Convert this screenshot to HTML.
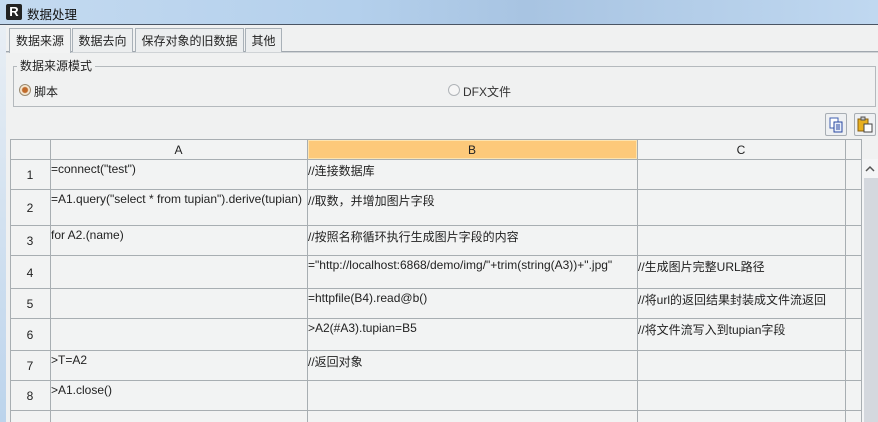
<!DOCTYPE html><html><head><meta charset="utf-8"><style>
*{margin:0;padding:0;box-sizing:border-box}
body{width:878px;height:422px;overflow:hidden;background:#f0f1f1;font:12px "Liberation Sans","Noto Sans CJK SC",sans-serif;color:#222;position:relative}
.a{position:absolute}
.title{left:0;top:0;width:878px;height:25px;background:linear-gradient(90deg,#c4daf0,#b4d0ec 40%,#a8c4e2 60%,#c0d8f0);border-bottom:1px solid #4a5564}
.tab{top:28px;height:24px;border:1px solid #a9b1b8;border-bottom:none;background:#eceeef;padding:4px 0 0;font-size:12px;white-space:nowrap;text-align:center;line-height:16px}
.cell{position:absolute;font-size:12px;padding:1px 1px;white-space:nowrap;overflow:hidden}
</style></head><body>
<div class="a title"></div>
<div class="a" style="left:6px;top:4px;width:16px;height:16px;background:#222;border-radius:2px;color:#fff;font:bold 13px 'Liberation Sans';text-align:center;line-height:16px">R</div>
<div class="a" style="left:27px;top:4px;font-size:12.5px;color:#111;white-space:nowrap">数据处理</div>
<div class="a" style="left:0;top:26px;width:6px;height:396px;background:linear-gradient(#e8eef4,#bcd4ec)"></div>
<div class="a" style="left:6px;top:51px;width:872px;height:2px;border-top:1px solid #a0a7ae;border-bottom:1px solid #cfd3d6"></div>
<div class="a tab" style="left:9px;width:62px;height:25px;background:#f2f3f3">数据来源</div>
<div class="a tab" style="left:72px;width:61px">数据去向</div>
<div class="a tab" style="left:135px;width:109px">保存对象的旧数据</div>
<div class="a tab" style="left:245px;width:37px">其他</div>
<div class="a" style="left:13px;top:66px;width:863px;height:41px;border:1px solid #b4b9bd"></div>
<div class="a" style="left:17px;top:59px;background:#f0f1f1;padding:0 3px;font-size:12px;white-space:nowrap;line-height:15px">数据来源模式</div>
<div class="a" style="left:19px;top:84px;width:12px;height:12px;border-radius:50%;border:1px solid #9a8a70;background:radial-gradient(circle,#c06a2a 0,#c06a2a 2.5px,#f4e6d0 3.5px)"></div>
<div class="a" style="left:34px;top:83px;font-size:12px;white-space:nowrap">脚本</div>
<div class="a" style="left:448px;top:84px;width:12px;height:12px;border-radius:50%;border:1px solid #b0b4b8;background:#f6f6f6"></div>
<div class="a" style="left:463px;top:83px;font-size:12px;color:#333;white-space:nowrap">DFX文件</div>
<div class="a" style="left:825px;top:113px;width:22px;height:23px;border:1px solid #a8aeb4;border-radius:2px;background:#eef0f2"><svg width="20" height="20"><rect x="4" y="4" width="8" height="10" fill="#fff" stroke="#4060b0"/><rect x="8" y="8" width="8" height="10" fill="#e8eefa" stroke="#2a48a0"/><path d="M10 11h4M10 13h4M10 15h4" stroke="#2a48a0"/></svg></div>
<div class="a" style="left:854px;top:113px;width:22px;height:23px;border:1px solid #a8aeb4;border-radius:2px;background:#eef0f2"><svg width="20" height="20"><rect x="3" y="5" width="10" height="12" fill="#e8b020" stroke="#8a6010"/><rect x="6" y="3" width="4" height="3" fill="#ccc" stroke="#555"/><rect x="9" y="10" width="8" height="8" fill="#fff" stroke="#444"/></svg></div>
<svg class="a" style="left:0;top:0" width="878" height="422">
<rect x="10.5" y="139.5" width="851" height="290" fill="#f2f3f3" stroke="#a8aeb2"/>
<rect x="308" y="140" width="329" height="19" fill="#fdc97a"/>
<rect x="308.5" y="140.5" width="328" height="18" fill="none" stroke="#fde4b0"/>
<g stroke="#a8aeb2">
<path d="M10 159.5H862M10 189.5H862M10 225.5H862M10 255.5H862M10 288.5H862M10 318.5H862M10 350.5H862M10 380.5H862M10 410.5H862"/>
<path d="M50.5 139V422M307.5 139V422M637.5 139V422M845.5 139V422"/>
</g>
<rect x="862" y="159" width="16" height="263" fill="#f4f5f6"/>
<rect x="864" y="178" width="14" height="244" fill="#d4d8de"/>
<path d="M866 171l4-4 4 4" stroke="#555" stroke-width="1.5" fill="none"/>
</svg>
<div class="cell" style="left:50px;top:142px;width:257px;text-align:center">A</div>
<div class="cell" style="left:307px;top:142px;width:330px;text-align:center">B</div>
<div class="cell" style="left:637px;top:142px;width:208px;text-align:center">C</div>
<div class="cell" style="left:10px;top:167px;width:40px;text-align:center">1</div>
<div class="cell" style="left:10px;top:200px;width:40px;text-align:center">2</div>
<div class="cell" style="left:10px;top:233px;width:40px;text-align:center">3</div>
<div class="cell" style="left:10px;top:265px;width:40px;text-align:center">4</div>
<div class="cell" style="left:10px;top:296px;width:40px;text-align:center">5</div>
<div class="cell" style="left:10px;top:327px;width:40px;text-align:center">6</div>
<div class="cell" style="left:10px;top:358px;width:40px;text-align:center">7</div>
<div class="cell" style="left:10px;top:388px;width:40px;text-align:center">8</div>
<div class="cell" style="left:50px;top:161px;width:257px">=connect("test")</div>
<div class="cell" style="left:50px;top:191px;width:257px">=A1.query("select * from tupian").derive(tupian)</div>
<div class="cell" style="left:50px;top:227px;width:257px">for A2.(name)</div>
<div class="cell" style="left:50px;top:352px;width:257px">&gt;T=A2</div>
<div class="cell" style="left:50px;top:382px;width:257px">&gt;A1.close()</div>
<div class="cell" style="left:307px;top:161px;width:330px">//连接数据库</div>
<div class="cell" style="left:307px;top:191px;width:330px">//取数，并增加图片字段</div>
<div class="cell" style="left:307px;top:227px;width:330px">//按照名称循环执行生成图片字段的内容</div>
<div class="cell" style="left:307px;top:257px;width:330px">="http://localhost:6868/demo/img/"+trim(string(A3))+".jpg"</div>
<div class="cell" style="left:307px;top:290px;width:330px">=httpfile(B4).read@b()</div>
<div class="cell" style="left:307px;top:320px;width:330px">&gt;A2(#A3).tupian=B5</div>
<div class="cell" style="left:307px;top:352px;width:330px">//返回对象</div>
<div class="cell" style="left:637px;top:257px;width:208px">//生成图片完整URL路径</div>
<div class="cell" style="left:637px;top:290px;width:208px">//将url的返回结果封装成文件流返回</div>
<div class="cell" style="left:637px;top:320px;width:208px">//将文件流写入到tupian字段</div>
</body></html>
